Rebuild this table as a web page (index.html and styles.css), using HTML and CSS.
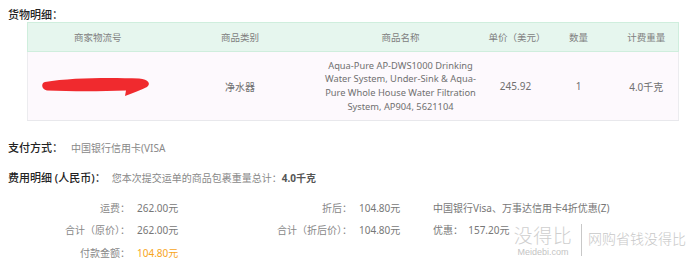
FILE: index.html
```html
<!DOCTYPE html>
<html lang="zh-CN">
<head>
<meta charset="utf-8">
<title>货物明细</title>
<link rel="stylesheet" href="styles.css">
</head>
<body>
<div class="page">
  <div class="title">货物明细：</div>
  <table class="goods">
    <colgroup>
      <col style="width:140px"><col style="width:145px"><col style="width:176px"><col style="width:54px"><col style="width:72px"><col style="width:64px">
    </colgroup>
    <thead>
      <tr><th>商家物流号</th><th>商品类别</th><th>商品名称</th><th>单价（美元）</th><th>数量</th><th>计费重量</th></tr>
    </thead>
    <tbody>
      <tr>
        <td class="track"><svg class="scribble" width="110" height="24" viewBox="0 0 110 24"><path d="M4 8 C 30 3.5, 70 3.5, 98 4.5 C 108 5.5, 110 10, 106 13 C 100 16, 92 19, 84 22 L 85 16.5 C 60 17.5, 30 17.5, 6 16.5 C 0 15, 0 9, 4 8 Z" fill="#f02a2e"/></svg></td>
        <td>净水器</td>
        <td class="name">Aqua-Pure AP-DWS1000 Drinking<br>Water System, Under-Sink &amp; Aqua-<br>Pure Whole House Water Filtration<br>System, AP904, 5621104</td>
        <td>245.92</td>
        <td>1</td>
        <td>4.0千克</td>
      </tr>
    </tbody>
  </table>

  <div class="line pay"><span class="label">支付方式：</span><span class="val">中国银行信用卡(VISA</span></div>
  <div class="line cost"><span class="label">费用明细 (人民币)：</span><span class="val">您本次提交运单的商品包裹重量总计：<b>4.0千克</b></span></div>

  <div class="fees">
    <span class="k">运费：</span><span class="v">262.00元</span>
    <span class="k">折后：</span><span class="v">104.80元</span>
    <span class="c">中国银行Visa、万事达信用卡4折优惠(Z)</span>

    <span class="k">合计（原价）：</span><span class="v">262.00元</span>
    <span class="k">合计（折后价）：</span><span class="v">104.80元</span>
    <span class="c">优惠：&nbsp;&nbsp;157.20元</span>

    <span class="k">付款金额：</span><span class="v pay-amt">104.80元</span>
    <span></span><span></span><span></span>
  </div>

  <div class="watermark">
    <div class="wm-brand"><span class="wm-big">没得比</span><span class="wm-small">Meidebi.com</span></div>
    <span class="wm-bar"></span>
    <span class="wm-slogan">网购省钱没得比</span>
  </div>
</div>
</body>
</html>
```
FILE: styles.css
```css
html, body {
  margin: 0;
  padding: 0;
  background: #fff;
}
body {
  font-family: "Noto Sans", "Noto Sans CJK SC", sans-serif;
  font-size: 10px;
  color: #666;
}
.page {
  position: relative;
  width: 700px;
  height: 272px;
  padding: 8px 0 0 8px;
  box-sizing: border-box;
}
.title {
  font-size: 11px;
  line-height: 14px;
  color: #222;
  font-weight: 500;
}
.goods {
  margin: 0 0 0 19px;
  border-collapse: collapse;
  table-layout: fixed;
  width: 651px;
}
.goods th {
  background: #e6f6ee;
  border: 1px solid #cfeedd;
  border-left: none;
  border-right: none;
  height: 28px;
  padding: 0;
  font-weight: normal;
  color: #808080;
  text-align: center;
  white-space: nowrap;
  font-size: 9.5px;
}
.goods th:first-child { border-left: 1px solid #cfeedd; }
.goods th:last-child { border-right: 1px solid #cfeedd; }
.goods td {
  background: #fdf9fd;
  border-bottom: 1px solid #e8e8ec;
  height: 68px;
  padding: 0;
  text-align: center;
  color: #707070;
  white-space: nowrap;
}
.goods td:first-child { border-left: 1px solid #ececef; }
.goods td:last-child { border-right: 1px solid #ececef; }
.goods td.track { text-align: left; padding-left: 13px; }
.scribble { display: block; }
.goods td.name {
  line-height: 13.7px;
  font-size: 9.3px;
}
.line {
  display: flex;
  align-items: center;
  gap: 8px;
  line-height: 14px;
}
.line .label {
  font-size: 11px;
  color: #222;
  font-weight: 500;
}
.line .val { color: #888; }
.line .val b { color: #555; font-weight: bold; }
.pay { margin-top: 20px; }
.cost { margin-top: 16px; gap: 6px; }
.fees {
  display: grid;
  grid-template-columns: 122px 140px 82px 81px auto;
  grid-auto-rows: 22.5px;
  align-items: center;
  margin-top: 11px;
  color: #777;
}
.fees .k { text-align: right; color: #888; }
.fees .v { padding-left: 7px; color: #777; }
.fees .v.pay-amt { color: #f7a51c; }
.fees .c { color: #777; }
.watermark {
  position: absolute;
  left: 513px;
  top: 224px;
  display: flex;
  align-items: flex-start;
  color: #c8c8c8;
  white-space: nowrap;
}
.wm-brand {
  display: flex;
  flex-direction: column;
  align-items: center;
  gap: 2px;
  width: 60px;
}
.wm-big {
  font-family: "Noto Sans CJK SC", sans-serif;
  font-weight: 300;
  font-size: 19px;
  line-height: 21px;
  letter-spacing: 0.5px;
  color: #cfcfcf;
}
.wm-small {
  font-family: "Liberation Sans", sans-serif;
  font-size: 9px;
  line-height: 10px;
  color: #c4c4c4;
}
.wm-bar {
  width: 1px;
  height: 32px;
  background: #c8c8c8;
  margin: 0 6px 0 8px;
}
.wm-slogan {
  font-family: "Noto Sans CJK SC", sans-serif;
  font-weight: 300;
  font-size: 14px;
  line-height: 16px;
  margin-top: 6px;
  color: #c8c8c8;
}
```
